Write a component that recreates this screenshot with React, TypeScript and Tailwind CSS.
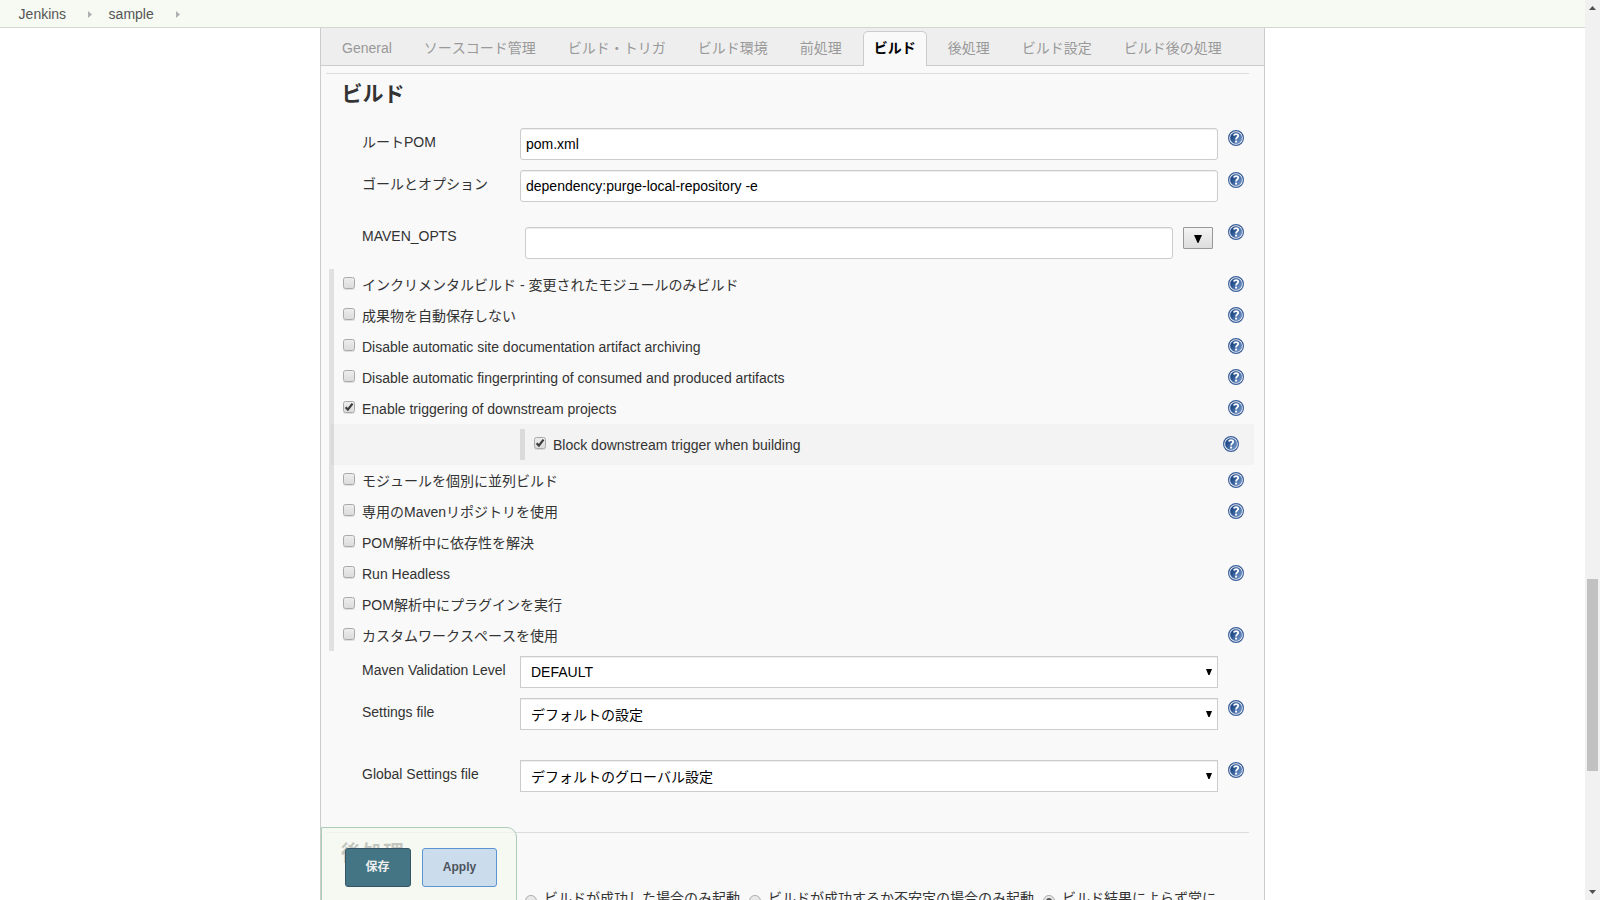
import React from "react";

const FONT = "font-['Liberation_Sans','Noto_Sans_CJK_JP',sans-serif]";

// Kana keep their full-width advance; Latin labels keep normal kerning.
const kerning = (text: string) =>
  /[\u3040-\u9fff]/.test(text) ? "[font-kerning:none]" : "";

function Help({ className = "" }: { className?: string }) {
  return (
    <svg className={`size-4 shrink-0 ${className}`} viewBox="0 0 16 16">
      <defs>
        <linearGradient id="helpFill" x1="0" y1="0.2" x2="1" y2="0.8">
          <stop offset="0.2" stopColor="#204a87" />
          <stop offset="1" stopColor="#7398cc" />
        </linearGradient>
      </defs>
      <circle cx="8" cy="8" r="7.4" fill="#fff" stroke="#3a5f9c" strokeWidth="1.2" />
      <circle cx="8" cy="8" r="5.8" fill="url(#helpFill)" stroke="#3a5f9c" strokeWidth="0.4" />
      <path
        d="M5.8 5.6C6.1 4.5 6.9 4.1 8.1 4.1S10.2 4.8 10.2 5.8C10.2 7.4 8.1 7.5 8.1 9.4"
        fill="none"
        stroke="#fff"
        strokeWidth="1.8"
      />
      <rect x="7.1" y="10.6" width="2" height="1.9" fill="#fff" />
    </svg>
  );
}

function Check({ checked = false }: { checked?: boolean }) {
  return (
    <span className="mt-2 flex size-3 shrink-0 rounded-[2.5px] border border-[#a9a9a9] bg-linear-to-b from-[#ededed] to-[#dcdcdc] shadow-[0_1px_0_rgba(0,0,0,0.1)]">
      {checked && (
        <svg className="size-[10px]" viewBox="0 0 10 10">
          <path d="M1.6 5.2 3.9 7.6 8.5 1.6" fill="none" stroke="#3c3c3c" strokeWidth="2.2" />
        </svg>
      )}
    </span>
  );
}

function Option({ text, checked, help = true }: { text: string; checked?: boolean; help?: boolean }) {
  return (
    <div className="flex h-[31px] items-start pl-[9px]">
      <Check checked={checked} />
      <span className={`mt-[6px] ml-[7px] leading-5 whitespace-pre ${kerning(text)}`}>{text}</span>
      {help && <Help className="mt-[7px] ml-auto" />}
    </div>
  );
}

const INPUT =
  "h-8 border border-[#ccc] bg-white text-black shadow-[inset_0_1px_1px_rgba(0,0,0,0.075)] outline-none";

function TextRow({ label, value }: { label: string; value: string }) {
  return (
    <div className="flex h-[42px] items-start pl-[41px]">
      <span className={`mt-1 w-[158px] shrink-0 leading-5 ${kerning(label)}`}>{label}</span>
      <input className={`${INPUT} w-[698px] rounded-[3px] px-[5px]`} defaultValue={value} />
      <Help className="mt-[2px] ml-[10px]" />
    </div>
  );
}

function SelectRow({ label, value, help = true, low = false }: { label: string; value: string; help?: boolean; low?: boolean }) {
  return (
    <div className="flex h-8 items-start pl-[41px]">
      <span className="mt-1 w-[158px] shrink-0 leading-5">{label}</span>
      <div className={`${INPUT} flex w-[698px] items-start justify-between pr-[5px] pl-[10px]`}>
        <span className={`${low ? "mt-[6px]" : "mt-[5px]"} leading-5 ${kerning(value)}`}>{value}</span>
        <svg className="mt-3 h-[6px] w-[6px]" viewBox="0 0 6 6">
          <path d="M0 0H6L3.6 6H2.4Z" fill="#000" />
        </svg>
      </div>
      {help && <Help className="mt-[2px] ml-[10px]" />}
    </div>
  );
}

function Radio({ text, on = false }: { text: string; on?: boolean }) {
  return (
    <span className="flex items-start">
      <span className="mt-[8px] flex size-3 items-center justify-center rounded-full border border-[#a9a9a9] bg-linear-to-b from-[#ededed] to-[#dcdcdc]">
        {on && <span className="size-[6px] rounded-full bg-[#555]" />}
      </span>
      <span className="mt-px ml-[7px] leading-5 whitespace-nowrap [font-kerning:none]">{text}</span>
    </span>
  );
}

const TABS = ["General", "ソースコード管理", "ビルド・トリガ", "ビルド環境", "前処理", "ビルド", "後処理", "ビルド設定", "ビルド後の処理"];

function Crumb({ children }: { children: React.ReactNode }) {
  return (
    <>
      <span className="leading-5">{children}</span>
      <svg className="mt-[7px] h-[7px] w-1" viewBox="0 0 4 7">
        <path d="M0 0 4 3.5 0 7Z" fill="#b0b0b0" />
      </svg>
    </>
  );
}

export default function App() {
  return (
    <div lang="ja" className={`relative flex h-[900px] w-[1600px] overflow-hidden bg-white text-[14px] text-[#333] ${FONT}`}>
      <div className="flex w-[1585px] flex-col">
        <header className="flex h-7 shrink-0 items-start border-b border-[#d3d7cf] bg-[#f6faf2] pt-1 text-[#555]">
          <div className="ml-[18.6px] flex w-[90px] items-start gap-[22px]">
            <Crumb>Jenkins</Crumb>
          </div>
          <div className="flex items-start gap-[22px]">
            <Crumb>sample</Crumb>
          </div>
        </header>

        <main className="ml-[320px] h-[872px] w-[945px] shrink-0 overflow-hidden border-x border-[#ccc] bg-[#f9f9f9]">
          <nav className="flex h-[38px] items-start border-b border-[#ccc] bg-[#eee] pt-[3px] pl-[5px] text-[#999]">
            {TABS.map((t) =>
              t === "ビルド" ? (
                <span key={t} className="mx-[5px] h-[35px] rounded-t-[5px] border border-b-0 border-[#ccc] bg-[#f9f9f9] px-[10px] pt-[6px] leading-5 font-bold text-black [font-kerning:none]">
                  {t}
                </span>
              ) : (
                <span key={t} className={`mx-[5px] px-[11px] pt-[7px] leading-5 ${kerning(t)}`}>
                  {t}
                </span>
              ),
            )}
          </nav>

          <section className="mt-[7px]">
            <div className="ml-[5px] h-px w-[923px] bg-[#ddd]" />
            <h2 className="h-[54px] pt-[5px] pl-[20.6px] text-[21px] leading-[30px] font-bold [font-kerning:none]">ビルド</h2>

            <TextRow label="ルートPOM" value="pom.xml" />
            <TextRow label="ゴールとオプション" value="dependency:purge-local-repository -e" />

            <div className="flex h-[57px] items-start pt-3 pl-[41px]">
              <span className="mt-[2px] w-[163px] shrink-0 leading-5">MAVEN_OPTS</span>
              <input className={`${INPUT} mt-[3px] w-[648px] rounded-[3px] px-[5px]`} />
              <button className="mt-[3px] ml-[10px] flex h-[22px] w-[30px] items-center justify-center rounded-[1px] border border-[#999] bg-linear-to-b from-[#f4f4f4] to-[#ddd]">
                <svg className="mt-[2px] h-2 w-2" viewBox="0 0 8 8">
                  <path d="M0 0H8L4.4 8H3.6Z" fill="#000" />
                </svg>
              </button>
              <Help className="ml-[15px]" />
            </div>

            <div className="ml-2 w-[915px] border-l-[5px] border-[#e0e0e0]">
              <Option text="インクリメンタルビルド - 変更されたモジュールのみビルド" />
              <Option text="成果物を自動保存しない" />
              <Option text="Disable automatic site documentation artifact archiving" />
              <Option text="Disable automatic fingerprinting of consumed and produced artifacts" />
              <Option text="Enable triggering of downstream projects" checked />
              <div className="-mr-[10px] -ml-[3px] h-[41px] bg-black/[0.025] pt-[5px] pl-[189px]">
                <div className="w-[719px] border-l-[5px] border-[#dadada]">
                  <Option text="Block downstream trigger when building" checked />
                </div>
              </div>
              <Option text="モジュールを個別に並列ビルド" />
              <Option text="専用のMavenリポジトリを使用" />
              <Option text="POM解析中に依存性を解決" help={false} />
              <Option text="Run Headless" />
              <Option text="POM解析中にプラグインを実行" help={false} />
              <Option text="カスタムワークスペースを使用" />
            </div>

            <div className="flex flex-col pt-[5px]">
              <SelectRow label="Maven Validation Level" value="DEFAULT" help={false} />
              <div className="h-[10px]" />
              <SelectRow label="Settings file" value="デフォルトの設定" low />
              <div className="h-[30px]" />
              <SelectRow label="Global Settings file" value="デフォルトのグローバル設定" low />
            </div>
          </section>

          <section className="mt-10">
            <div className="ml-[5px] h-px w-[923px] bg-[#ddd]" />
            <h2 className="h-[54px] pt-[5px] pl-[20px] text-[21px] leading-[30px] font-bold">後処理</h2>
            <div className="flex gap-[9px] pl-[204px]">
              <Radio text="ビルドが成功した場合のみ起動" />
              <Radio text="ビルドが成功するか不安定の場合のみ起動" />
              <Radio text="ビルド結果によらず常に" on />
            </div>
          </section>
        </main>
      </div>

      <div className="flex w-[15px] flex-col items-center justify-between bg-[#f1f1f1] pt-[6px] pb-[6px]">
        <svg className="h-1 w-[7px]" viewBox="0 0 7 4">
          <path d="M3.5 0 7 4H0Z" fill="#505050" />
        </svg>
        <div className="mt-[569px] mb-auto h-[192px] w-[11px] bg-[#c1c1c1]" />
        <svg className="h-1 w-[7px]" viewBox="0 0 7 4">
          <path d="M0 0H7L3.5 4Z" fill="#505050" />
        </svg>
      </div>

      <div className="absolute top-[827px] left-[321px] flex h-[80px] w-[196px] items-start gap-[11px] rounded-tr-[10px] border border-[#a9cdb9] bg-[#f4f8ef]/75 pt-5 pl-[23px] text-[12px] font-bold">
        <button className="h-[39px] w-[66px] rounded-[3px] border border-[#355564] bg-[#437585] pr-px pb-[2px] text-[#eee]">保存</button>
        <button className="h-[39px] w-[75px] rounded-[3px] border border-[#5c93d1] bg-[#cbdcec] pb-[2px] text-[#4d545d]">Apply</button>
      </div>
    </div>
  );
}
